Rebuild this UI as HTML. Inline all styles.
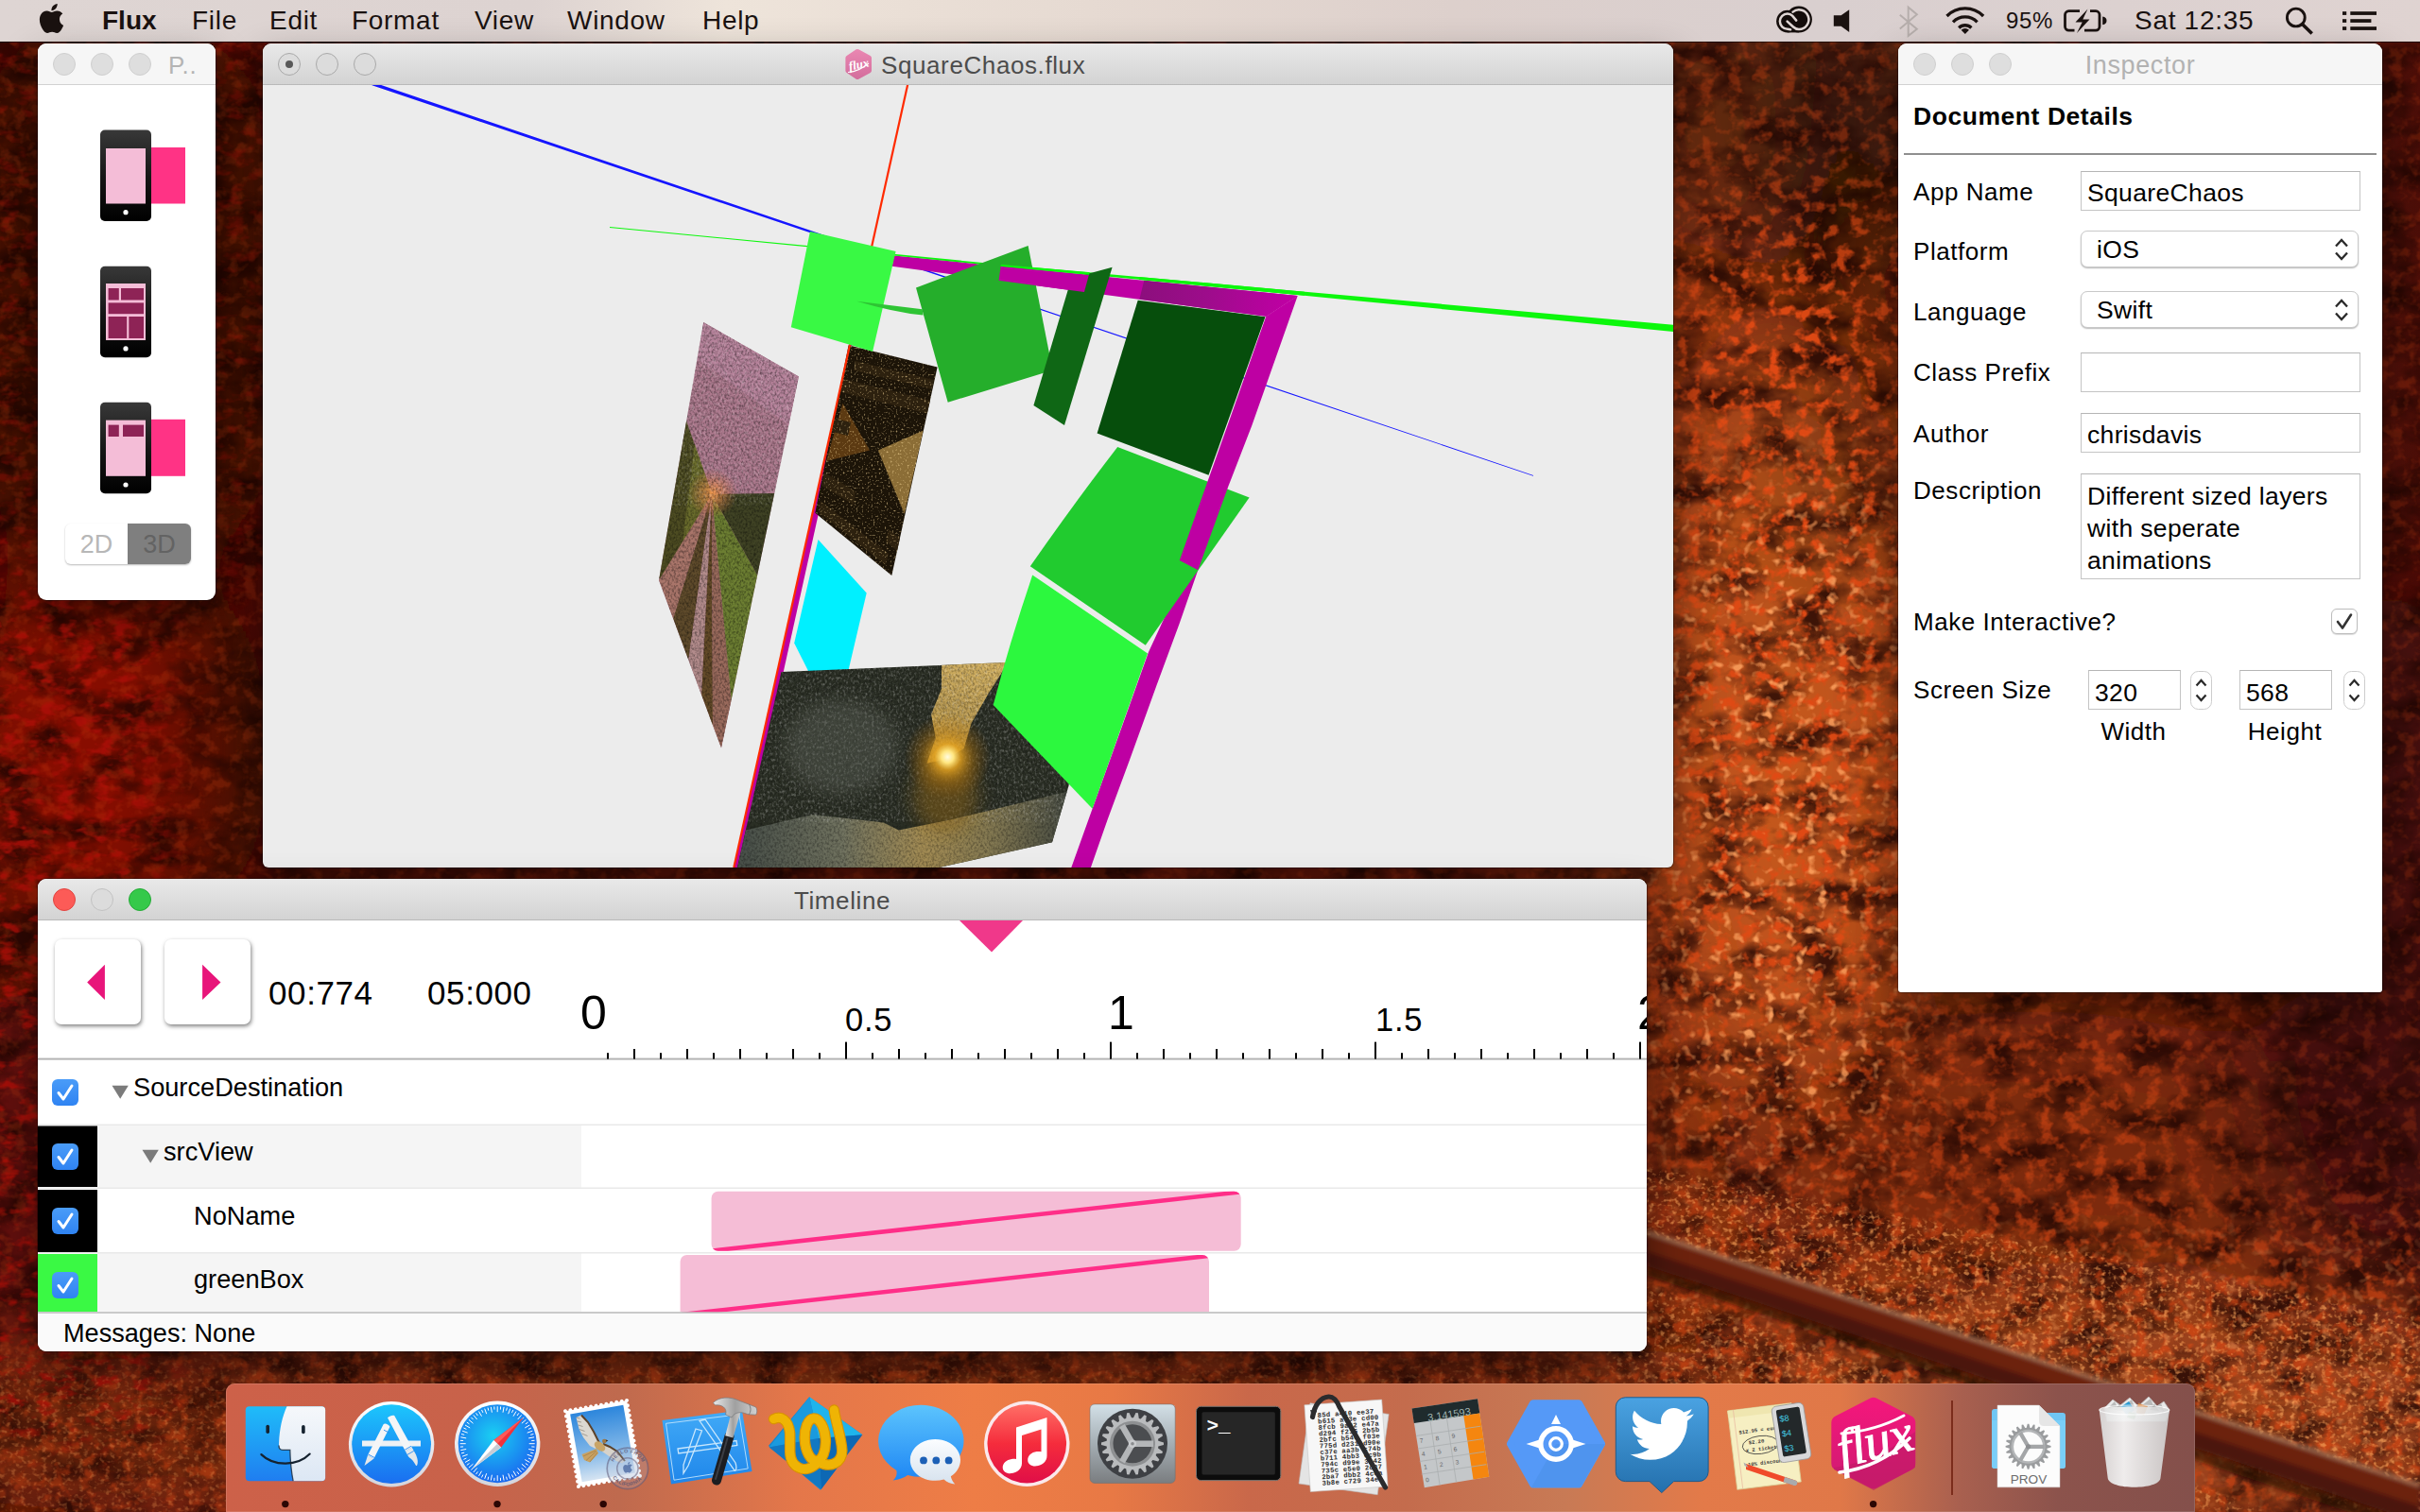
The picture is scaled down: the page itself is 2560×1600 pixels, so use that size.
<!DOCTYPE html>
<html lang="en">
<head>
<meta charset="utf-8">
<title>Flux</title>
<style>
html,body{margin:0;padding:0;}
body{width:2560px;height:1600px;overflow:hidden;position:relative;background:#5e150a;font-family:"Liberation Sans",sans-serif;color:#000;}
.abs{position:absolute;}
#wall{position:absolute;left:0;top:0;width:2560px;height:1600px;}
#menubar{position:absolute;left:0;top:0;width:2560px;height:44px;background:linear-gradient(90deg,#ded5d3 0%,#ddd3d1 22%,#eee4da 30%,#e6dad2 45%,#ddd0cc 60%,#d9cfcf 75%,#dfd3d1 100%);box-shadow:0 1px 0 rgba(0,0,0,.55);}
#menubar .mi{position:absolute;top:0;height:44px;line-height:43px;font-size:28px;color:#1a1210;white-space:nowrap;letter-spacing:.7px;}
.win{position:absolute;border-radius:9px;box-shadow:0 0 0 1px rgba(0,0,0,.28),0 18px 40px rgba(0,0,0,.45);overflow:hidden;background:#fff;}
.tbar{position:absolute;left:0;top:0;right:0;height:43px;border-bottom:1px solid #b9b9b9;background:linear-gradient(#e9e9e9,#d3d3d3);}
.tbar.inactive{background:#f6f6f6;border-bottom:1px solid #d2d2d2;}
.tl{position:absolute;top:10px;width:24px;height:24px;border-radius:50%;box-sizing:border-box;}
.tl.off{background:#dedede;border:1px solid #cfcfcf;}
.ttl{position:absolute;top:1.500px;height:43px;line-height:43px;font-size:26px;letter-spacing:.6px;color:#4a4a4a;white-space:nowrap;}

#timeline .lab{position:absolute;font-size:27.200px;line-height:32px;white-space:nowrap;color:#000;}
.cb{position:absolute;left:15px;width:28px;height:28px;border-radius:6px;background:linear-gradient(#4a9cf8,#2f83f2);}
.cb svg{position:absolute;left:0;top:0;}
#inspector .lb{position:absolute;left:16px;font-size:26px;line-height:30px;white-space:nowrap;color:#000;letter-spacing:.55px;}
#inspector .fld{position:absolute;box-sizing:border-box;border:1px solid #c4c4c4;border-top-color:#b5b5b5;background:#fff;font-size:26.500px;line-height:30px;white-space:nowrap;color:#000;letter-spacing:.35px;}
#inspector .pop{position:absolute;box-sizing:border-box;border:1px solid #c9c9c9;border-radius:7px;background:#fff;box-shadow:0 1px 1.500px rgba(0,0,0,.28);font-size:26.500px;line-height:30px;white-space:nowrap;color:#000;letter-spacing:.35px;}
</style>
</head>
<body>
<svg id="wall" width="2560" height="1600" viewBox="0 0 2560 1600">
<defs>
<filter id="wleaf" x="0" y="0" width="100%" height="100%" color-interpolation-filters="sRGB">
<feTurbulence type="fractalNoise" baseFrequency="0.07 0.08" numOctaves="3" seed="4"/>
<feColorMatrix values="0 0 0 0 0.88  0 0 0 0 0.29  0 0 0 0 0.08  4.2 0 0 0 -2.05"/>
</filter>
<filter id="wdark" x="0" y="0" width="100%" height="100%" color-interpolation-filters="sRGB">
<feTurbulence type="fractalNoise" baseFrequency="0.02 0.03" numOctaves="4" seed="9"/>
<feColorMatrix values="0 0 0 0 0.12  0 0 0 0 0.02  0 0 0 0 0.01  0 2.6 0 0 -1.0"/>
</filter>
<filter id="wfine" x="0" y="0" width="100%" height="100%" color-interpolation-filters="sRGB">
<feTurbulence type="fractalNoise" baseFrequency="0.18 0.22" numOctaves="2" seed="21"/>
<feColorMatrix values="0 0 0 0 1  0 0 0 0 0.66  0 0 0 0 0.36  0 0 4 0 -2.1"/>
</filter>
<filter id="wred" x="0" y="0" width="100%" height="100%" color-interpolation-filters="sRGB">
<feTurbulence type="fractalNoise" baseFrequency="0.05 0.09" numOctaves="3" seed="14"/>
<feColorMatrix values="0 0 0 0 0.68  0 0 0 0 0.06  0 0 0 0 0.03  4 0 0 0 -2.05"/>
</filter>
<mask id="redmask"><g filter="url(#bl30)"><rect x="-60" y="0" width="350" height="620" fill="#5c5c5c"/><rect x="-60" y="620" width="230" height="900" fill="#d0d0d0"/></g></mask>
<filter id="wlite" x="0" y="0" width="100%" height="100%" color-interpolation-filters="sRGB">
<feTurbulence type="fractalNoise" baseFrequency="0.09 0.1" numOctaves="2" seed="33"/>
<feColorMatrix values="0 0 0 0 0.98  0 0 0 0 0.62  0 0 0 0 0.36  0 4.5 0 0 -2.55"/>
</filter>
<mask id="litemask"><g filter="url(#bl60)"><rect x="1770" y="520" width="230" height="700" fill="#fff"/><rect x="1742" y="1320" width="900" height="250" fill="#777"/></g></mask>
<filter id="bl60"><feGaussianBlur stdDeviation="55"/></filter>
<filter id="bl30"><feGaussianBlur stdDeviation="28"/></filter>
<filter id="bl4"><feGaussianBlur stdDeviation="2.500"/></filter>
<linearGradient id="wb" x1="0" y1="0" x2="1" y2="0"><stop offset="0" stop-color="#4a0a05"/><stop offset=".08" stop-color="#5e0d06"/><stop offset=".13" stop-color="#5a1208"/><stop offset=".6" stop-color="#70190b"/><stop offset=".7" stop-color="#8a3212"/><stop offset=".8" stop-color="#86300f"/><stop offset=".9" stop-color="#6a1a0b"/><stop offset="1" stop-color="#4c0e08"/></linearGradient>
<mask id="lmask"><rect width="2560" height="1600" fill="#383838"/><g filter="url(#bl60)"><rect x="1760" y="260" width="260" height="1000" fill="#fff"/><rect x="1760" y="1040" width="560" height="300" fill="#8a8a8a"/><rect x="0" y="1420" width="2560" height="200" fill="#707070"/><rect x="1742" y="1300" width="900" height="320" fill="#a0a0a0"/><rect x="1760" y="30" width="260" height="230" fill="#666"/></g></mask>
<mask id="fmask"><g filter="url(#bl4)"><path d="M1700 1226L2600 1402 2600 1640 1700 1295z" fill="#fff"/><path d="M1700 1345L2400 1600 1700 1600z" fill="#ddd"/></g><g filter="url(#bl30)"><rect x="-50" y="1440" width="1800" height="200" fill="#777"/></g></mask>
</defs>
<rect width="2560" height="1600" fill="url(#wb)"/>
<g filter="url(#bl60)">
<ellipse cx="1890" cy="760" rx="130" ry="400" fill="#c4561c"/>
<ellipse cx="1890" cy="130" rx="170" ry="150" fill="#3c1c0a"/>
<ellipse cx="1930" cy="520" rx="40" ry="120" fill="#4a2a10"/>
<ellipse cx="1940" cy="240" rx="40" ry="200" fill="#211006"/>
<ellipse cx="1805" cy="150" rx="35" ry="110" fill="#7c3312"/>
<ellipse cx="80" cy="800" rx="120" ry="200" fill="#8a0f06"/>
<ellipse cx="235" cy="790" rx="45" ry="200" fill="#240a04"/>
<ellipse cx="130" cy="300" rx="140" ry="300" fill="#3c0905"/>
<ellipse cx="253" cy="340" rx="30" ry="320" fill="#300905"/>
<ellipse cx="18" cy="330" rx="30" ry="320" fill="#3a0905"/>
<ellipse cx="20" cy="1250" rx="60" ry="250" fill="#6a1208"/>
<ellipse cx="2150" cy="1230" rx="330" ry="160" fill="#7c2a0e"/>
<ellipse cx="2530" cy="1000" rx="90" ry="400" fill="#430d07"/>
<ellipse cx="2490" cy="1170" rx="130" ry="130" fill="#3c0d07"/>
<ellipse cx="1000" cy="1520" rx="1300" ry="110" fill="#7c2e11"/>
<ellipse cx="2250" cy="1500" rx="420" ry="130" fill="#a3461b"/>
</g>
<rect width="2560" height="1600" filter="url(#wdark)" opacity=".8"/>
<g mask="url(#lmask)"><rect width="2560" height="1600" filter="url(#wleaf)"/></g>
<g mask="url(#redmask)"><rect width="320" height="1600" filter="url(#wred)"/></g>
<g mask="url(#litemask)"><rect width="2560" height="1600" filter="url(#wlite)"/></g>
<g mask="url(#fmask)" opacity=".6"><rect x="0" y="1200" width="2560" height="400" filter="url(#wfine)"/></g>
<g filter="url(#bl4)"><path d="M1742 1304L2560 1572 2560 1610 1742 1338z" fill="#6c220c"/><path d="M1742 1324L2560 1594 2560 1612 1742 1340z" fill="#4c1408"/><path d="M1742 1340L2560 1612 2560 1626 1742 1350z" fill="#2a0a05" opacity=".7"/><path d="M1742 1303.500L2560 1571.500" stroke="#b48a6a" stroke-width="3.500" fill="none" opacity=".8"/></g>
</svg>
<div id="menubar">
<svg class="abs" style="left:39px;top:4px" width="31" height="31" viewBox="0 0 24 24"><path fill="#1a1210" d="M12.152 6.896c-.948 0-2.415-1.078-3.96-1.04-2.04.027-3.91 1.183-4.961 3.014-2.117 3.675-.546 9.103 1.519 12.09 1.013 1.454 2.208 3.09 3.792 3.039 1.52-.065 2.09-.987 3.935-.987 1.831 0 2.35.987 3.96.948 1.637-.026 2.676-1.48 3.676-2.948 1.156-1.688 1.636-3.325 1.662-3.415-.039-.013-3.182-1.221-3.22-4.857-.026-3.04 2.48-4.494 2.597-4.559-1.429-2.09-3.623-2.324-4.39-2.376-2-.156-3.675 1.09-4.61 1.09zM15.53 3.83c.843-1.012 1.4-2.427 1.245-3.83-1.207.052-2.662.805-3.532 1.818-.78.896-1.454 2.338-1.273 3.714 1.338.104 2.715-.688 3.559-1.701"/></svg>
<div class="mi" style="left:108px;font-weight:bold;letter-spacing:0">Flux</div>
<div class="mi" style="left:203px">File</div>
<div class="mi" style="left:285px">Edit</div>
<div class="mi" style="left:372px">Format</div>
<div class="mi" style="left:502px">View</div>
<div class="mi" style="left:600px">Window</div>
<div class="mi" style="left:743px">Help</div>
<svg class="abs" style="left:1870px;top:0" width="660" height="44" viewBox="1870 0 660 44">
<g fill="#140d0b"><circle cx="1890.900" cy="22.600" r="11.800"/><circle cx="1902.900" cy="20.600" r="14"/><rect x="1890.900" y="25" width="12" height="9.400"/></g>
<g fill="none" stroke="#e0d7d5" stroke-width="2.500" stroke-linecap="round" stroke-linejoin="round"><path d="M1894.100 31.300Q1892.500 30.700 1890.900 30.650A8.050 8.050 0 0 1 1890.900 14.550Q1894 14.600 1896 16.600L1900.200 21.600"/><path d="M1896.600 12.600A10.300 10.300 0 1 1 1902.900 30.900Q1899.500 30.900 1897 28.500L1890.600 22.600"/></g>
<path fill="#1a1210" d="M1939.800 16.200h7.800l8.600-6v23.700l-8.600-6.100h-7.800z"/>
<path fill="none" stroke="#b6aeac" stroke-width="2" stroke-linejoin="miter" d="M2009.800 15.700l18 15-9.100 7.300v-30.300l9.100 7.600-18 15.300"/>
<g fill="none" stroke="#1a1210" stroke-width="3.300">
<path d="M2059.500 17a27 27 0 0 1 38.600 0"/>
<path d="M2066 23.300a18 18 0 0 1 25.600 0"/>
<path d="M2072.200 29.500a9.300 9.300 0 0 1 13.200 0"/>
</g>
<path fill="#1a1210" d="M2078.800 36l-4.200-4.300a6 6 0 0 1 8.400 0z"/>
<g fill="none" stroke="#1a1210" stroke-width="2.800" stroke-linejoin="round">
<path d="M2200 11.700h-11.500a4 4 0 0 0 -4 4v12.400a4 4 0 0 0 4 4h6"/>
<path d="M2205 32.100h12a4 4 0 0 0 4-4v-12.400a4 4 0 0 0 -4-4h-6"/>
</g>
<path fill="#1a1210" d="M2224.200 17.500c3 .5 4.300 2.200 4.300 4.400s-1.300 3.900-4.300 4.400z"/>
<path fill="#1a1210" d="M2208.500 9.500l-13 14h7.200l-5.700 11.500 13.500-14.500h-7.200z"/>
<circle cx="2428.800" cy="18.500" r="9.400" fill="none" stroke="#1a1210" stroke-width="2.900"/>
<path d="M2435.700 25.800l10 9.700" stroke="#1a1210" stroke-width="3.600" fill="none"/>
<g fill="#1a1210">
<rect x="2478" y="12.200" width="4.200" height="3.700"/><rect x="2486.300" y="12.200" width="27.700" height="3.700"/>
<rect x="2478" y="20.200" width="4.200" height="3.700"/><rect x="2486.300" y="20.200" width="22.100" height="3.700"/>
<rect x="2478" y="28.200" width="4.200" height="3.700"/><rect x="2486.300" y="28.200" width="27.700" height="3.700"/>
</g>
</svg>
<div class="mi" style="left:2122px;font-size:24px;line-height:44px">95%</div>
<div class="mi" style="left:2258px">Sat 12:35</div>
</div>
<div class="win" id="palette" style="left:40px;top:46px;width:188px;height:589px;">
<div class="tbar inactive"></div>
<div class="tl off" style="left:16px"></div><div class="tl off" style="left:56px"></div><div class="tl off" style="left:96px"></div>
<div class="ttl" style="left:138px;color:#b4b4b4;">P..</div>
<svg class="abs" style="left:0;top:44px" width="188" height="545" viewBox="40 90 188 545">
<defs><linearGradient id="ph" x1="0" y1="0" x2="0" y2="1"><stop offset="0" stop-color="#383838"/><stop offset=".55" stop-color="#141414"/><stop offset="1" stop-color="#000"/></linearGradient></defs>
<g id="phone"><rect x="106" y="137.500" width="54" height="96.500" rx="5" fill="url(#ph)"/><circle cx="133" cy="224.700" r="2.600" fill="#fff"/></g>
<rect x="112" y="157" width="42" height="58.500" fill="#f4bdd7"/>
<rect x="160" y="156" width="36" height="59.500" fill="#ff3385"/>
<use href="#phone" y="144.200"/>
<rect x="112" y="300" width="42" height="60" fill="#f4bdd7"/>
<g fill="#8e2356"><rect x="114.600" y="305" width="11.200" height="12.500"/><rect x="128" y="305" width="24" height="12.500"/><rect x="114.600" y="320.400" width="37.400" height="11.800"/><rect x="114.600" y="335" width="19.600" height="23"/><rect x="136.300" y="335" width="15.700" height="23"/></g>
<use href="#phone" y="288.300"/>
<rect x="112" y="444.600" width="42" height="59.200" fill="#f4bdd7"/>
<g fill="#8e2356"><rect x="114.600" y="449.600" width="11.200" height="12.400"/><rect x="130" y="449.600" width="22" height="12.400"/></g>
<rect x="160" y="443.800" width="36" height="60" fill="#ff3385"/>
</svg>
<div class="abs" style="left:29px;top:508px;width:133px;height:43px;border-radius:6px;background:#fff;box-shadow:0 1px 2px rgba(0,0,0,.28);"></div>
<div class="abs" style="left:95px;top:508px;width:67px;height:43px;border-radius:0 6px 6px 0;background:#7f7f7f;"></div>
<div class="abs" style="left:29px;top:508px;width:66px;height:43px;line-height:44px;text-align:center;font-size:27px;color:#b7b7b7;">2D</div>
<div class="abs" style="left:95px;top:508px;width:67px;height:43px;line-height:44px;text-align:center;font-size:27px;color:#636363;">3D</div>
</div>
<div class="win" id="main" style="left:278px;top:46px;width:1492px;height:872px;background:#ececec;border-radius:9px 9px 6px 6px;">
<div class="tbar"></div>
<div class="tl" style="left:16px;background:#dcdcdc;border:1px solid #a9a9a9"></div><div class="abs" style="left:24px;top:18px;width:8px;height:8px;border-radius:50%;background:#585858"></div>
<div class="tl" style="left:56px;background:#dcdcdc;border:1px solid #a9a9a9"></div><div class="tl" style="left:96px;background:#dcdcdc;border:1px solid #a9a9a9"></div>
<svg class="abs" style="left:615px;top:5px" width="32" height="34" viewBox="0 0 32 34"><defs><linearGradient id="hx" x1="0" y1="0" x2="0" y2="1"><stop offset="0" stop-color="#ea87b2"/><stop offset="1" stop-color="#d36d9c"/></linearGradient></defs><path d="M15.300 1.200l12.400 6.800q1.300.8 1.300 2.300v13.400q0 1.500-1.300 2.300l-12.400 6.800q-1.300.6-2.600 0l-10-6.800q-1.300-.8-1.300-2.300v-13.400q0-1.500 1.300-2.300l10-6.800q1.300-.6 2.600 0z" fill="url(#hx)"/><text x="4.500" y="21.500" font-family="'Liberation Serif',serif" font-style="italic" font-weight="bold" font-size="13" fill="#fff" transform="rotate(-12 15 17)">flux</text><path d="M4 25.500q12-1 22-9.500" stroke="#fff" stroke-width="1.200" fill="none"/></svg>
<div class="ttl" style="left:654px;color:#4c4c4c;">SquareChaos.flux</div>
<svg class="abs" style="left:0;top:44px" width="1492" height="828" viewBox="278 90 1492 828">
<defs>
<clipPath id="cPink"><path d="M744.200 341L845 398.400 763 791.500 697 614z"/></clipPath>
<clipPath id="cDark"><path d="M897.600 365.300L991.600 388.400 943.300 608.900 862.300 542.700z"/></clipPath>
<clipPath id="cSnow"><path d="M826.500 710.900L1170 696.700 1113 891.300 993 918 780 918z"/></clipPath>
<linearGradient id="dm" gradientUnits="userSpaceOnUse" x1="1208" y1="305" x2="1360" y2="325"><stop offset="0" stop-color="#8c0f7d"/><stop offset=".45" stop-color="#9d0c8b"/><stop offset="1" stop-color="#be00a3"/></linearGradient>
<filter id="nz" x="0" y="0" width="100%" height="100%"><feTurbulence type="fractalNoise" baseFrequency="0.45 0.35" numOctaves="2" seed="7"/><feColorMatrix values="0 0 0 0 0  0 0 0 0 0  0 0 0 0 0  1.9 0 0 0 -0.75"/></filter>
<filter id="nzw" x="0" y="0" width="100%" height="100%"><feTurbulence type="fractalNoise" baseFrequency="0.4 0.3" numOctaves="2" seed="11"/><feColorMatrix values="0 0 0 0 1  0 0 0 0 1  0 0 0 0 1  0 2.2 0 0 -1.05"/></filter>
<filter id="nzl" x="0" y="0" width="100%" height="100%"><feTurbulence type="fractalNoise" baseFrequency="0.5" numOctaves="1" seed="5"/><feColorMatrix values="0 0 0 0 1  0 0 0 0 .75  0 0 0 0 .35  0 0 3.5 0 -2.05"/></filter>
<filter id="pbl" x="-50%" y="-50%" width="200%" height="200%"><feGaussianBlur stdDeviation="9"/></filter>
<radialGradient id="sun" gradientUnits="userSpaceOnUse" cx="1002.400" cy="801" r="46"><stop offset="0" stop-color="#fffbe0"/><stop offset=".14" stop-color="#ffe680"/><stop offset=".3" stop-color="#e0a020" stop-opacity=".85"/><stop offset=".6" stop-color="#a87010" stop-opacity=".45"/><stop offset="1" stop-color="#805008" stop-opacity="0"/></radialGradient>
<linearGradient id="sky" gradientUnits="userSpaceOnUse" x1="1030" y1="700" x2="1000" y2="805"><stop offset="0" stop-color="#d2b061"/><stop offset=".5" stop-color="#b99a52"/><stop offset="1" stop-color="#e6b748"/></linearGradient>
<linearGradient id="gnd" gradientUnits="userSpaceOnUse" x1="790" y1="0" x2="1130" y2="0"><stop offset="0" stop-color="#4a514a"/><stop offset=".3" stop-color="#70725f"/><stop offset=".55" stop-color="#a38c54"/><stop offset=".75" stop-color="#857a52"/><stop offset="1" stop-color="#464b42"/></linearGradient>
<radialGradient id="vp" gradientUnits="userSpaceOnUse" cx="754" cy="522" r="26"><stop offset="0" stop-color="#f09850"/><stop offset="1" stop-color="#c06a40" stop-opacity="0"/></radialGradient>

</defs>
<path d="M393.5 86.7L600.0 156.7L857.0 243.8L1000.0 292.5L1106.0 328.4L1340.0 407.6L1622.0 502.9L1622.0 503.7L1340.0 408.7L1106.0 329.7L1000.0 294.1L857.0 246.2L600.0 159.7L393.5 90.2z" fill="#1515ff"/>
<polygon points="899.7,362.0 902.2,362.0 866.0,543.0 782.8,918.0 776.3,918.0" fill="#be00a3"/>
<path d="M1267.300 603.200L1247.600 660 1223.500 725.300 1194.300 806.100 1172 866.300 1153.900 918 1133.300 918 1155.600 855.700 1190 760 1215 690 1245 625z" fill="#be00a3"/>
<g id="ftop"><path d="M945.900 270.400L1372.700 313 1339.300 334.800 943.600 281.700z" fill="#be00a3"/><path d="M645.0 240.0L854.0 260.1L1060.0 279.9L1210.0 293.4L1372.0 308.0L1440.0 314.1L1600.0 328.5L1770.0 343.8L1770.0 351.0L1600.0 334.3L1440.0 318.7L1372.0 312.0L1210.0 296.3L1060.0 281.9L854.0 261.2L645.0 240.9z" fill="#0cf70c"/></g>
<g clip-path="url(#cPink)"><rect x="690" y="335" width="160" height="460" fill="#ab788c"/>
<path d="M744 341L845 398 835 450 738 380z" fill="#b5829a"/>
<path d="M725 442L753 523 700 612 690 612 690 480z" fill="#4d4c22"/>
<path d="M735 470L753 523 722 575z" fill="#6a6c2c"/>
<path d="M753 523L697 614 712 655z" fill="#a9756a"/>
<path d="M753 523L712 655 728 700z" fill="#5e4a2b"/>
<path d="M753 523L728 700 742 738z" fill="#b28b8b"/>
<path d="M753 523L742 738 754 770z" fill="#634a28"/>
<path d="M753 523L754 770 763 792 774 745z" fill="#996a5c"/>
<path d="M753 523L774 745 802 610z" fill="#6c7e32"/>
<path d="M753 523L802 610 812 565 822 522z" fill="#3f4224"/>
<rect x="690" y="335" width="160" height="460" fill="url(#vp)"/>
<rect x="690" y="335" width="160" height="460" filter="url(#nz)" opacity=".5"/>
<rect x="690" y="335" width="160" height="200" filter="url(#nzw)" opacity=".25"/></g>
<g clip-path="url(#cDark)"><rect x="860" y="360" width="135" height="252" fill="#1c1408"/>
<path d="M976.800 455.500L928.900 476.600 956.700 543.700z" fill="#8b6d36"/>
<path d="M891.500 426.700L920 476.600 874 488z" fill="#5c3a12"/>
<path d="M889 400L985 424 982 438 886 414z M880 442L900 447 897 461 877 456z M872 500L905 520 903 534 869 514z M940 560L958 574 955 588 937 573z M905 382L988 402 986 412 903 392z M868 530L940 586 937 598 866 542z" fill="#2d210f"/>
<rect x="860" y="360" width="135" height="252" filter="url(#nzl)" opacity=".7"/></g>
<path d="M865.500 571L916.700 627.500 895 720 860 720 840.200 680.400z" fill="#00f0ff"/>
<g clip-path="url(#cSnow)"><rect x="775" y="690" width="400" height="230" fill="#2b2f25"/>
<path d="M996 700L1067 696 1060.500 710.400 1045 735 1027.500 765.400 1019.700 792 1002.400 803 980.400 807.800 989.800 781 985 756 996 729z" fill="url(#sky)"/>
<path d="M775 880L788.800 878.400 860 862 934.900 870.600 950.600 878.400 1005.600 867.500 1070 852 1129.600 837.600 1140 835 1140 920 775 920z" fill="url(#gnd)"/>
<rect x="775" y="690" width="400" height="180" filter="url(#nzw)" opacity=".33"/>
<rect x="775" y="690" width="400" height="230" filter="url(#nz)" opacity=".4"/>
<ellipse cx="1000" cy="842" rx="34" ry="40" fill="#8a6416" opacity=".5" filter="url(#pbl)"/><ellipse cx="890" cy="790" rx="60" ry="50" fill="#6a7068" opacity=".35" filter="url(#pbl)"/><circle cx="1002.400" cy="801" r="46" fill="url(#sun)"/></g>
<path d="M960.300 89L776.300 918" stroke="#ff2a00" stroke-width="2.200" fill="none"/>
<path d="M856.900 245L947.600 266.100 923.100 372 836.800 346.300z" fill="#39f944"/>
<path d="M906.200 318.700L975.700 327.300 976.500 333.600Q946 330.500 906.200 318.700z" fill="#2ec434"/>
<path d="M969 304.500L1087.600 260 1113.500 391.800 1002.700 425.800z" fill="#25ae2b"/>
<path d="M1133.400 294.500L1176.600 282.700 1126 450 1093.400 429z" fill="#0f6715"/>
<g clip-path="url(#cSeg2)"><use href="#ftop"/></g>
<clipPath id="cSeg2"><path d="M1060.200 270L1153.500 285 1146.700 310 1056.500 297.500z"/></clipPath>
<path d="M1203.700 317.700L1338.500 335.300 1278.500 502.700 1160.600 458.600z" fill="#064e0c"/>
<path d="M1210.300 296.800L1372.700 313 1339.300 334.800 1205.400 316.600z" fill="url(#dm)"/>
<path d="M1205.0 293.0L1380.0 308.7L1380.0 312.8L1205.0 295.9z" fill="#0cf70c"/>
<path d="M1182.200 472.900L1321.600 526.500 1211.800 682.700 1089.800 599.200Q1139 528.900 1182.200 472.900z" fill="#21cb2f"/>
<path d="M1372.700 313L1324.400 450 1299.400 514.600 1267.300 603.200 1247.800 592.900 1298.600 450 1339.300 334.800z" fill="#be00a3"/>
<path d="M1092.200 608.500L1214 691.500 1155.600 855.700 1050.700 746Q1068 680 1092.200 608.500z" fill="#2cf83e"/>

</svg>
</div>
<div class="win" id="timeline" style="left:40px;top:930px;width:1702px;height:500px;">
<div class="tbar"></div>
<div class="tl" style="left:16px;background:#fc5b57;border:1px solid #e2443f"></div><div class="tl" style="left:56px;background:#dcdcdc;border:1px solid #c2c2c2"></div><div class="tl" style="left:96px;background:#35c94a;border:1px solid #24ab36"></div>
<div class="ttl" style="left:0;width:1702px;text-align:center;color:#4c4c4c;">Timeline</div>
<div class="abs" style="left:18px;top:64px;width:91px;height:90px;border-radius:7px;background:#fff;box-shadow:1px 2px 4px rgba(0,0,0,.5);"></div>
<div class="abs" style="left:134px;top:64px;width:91px;height:90px;border-radius:7px;background:#fff;box-shadow:1px 2px 4px rgba(0,0,0,.5);"></div>
<svg class="abs" style="left:0;top:44px" width="1702" height="456" viewBox="0 0 1702 456">
<path d="M52.200 65.400L70.900 46.700 70.900 84z M193.500 65.400L174.100 46.700 174.100 84z" fill="#e8157a"/>
<path d="M975 0L1042 0 1009 33.600z" fill="#f0388a"/>
<rect x="0" y="145.600" width="1702" height="2" fill="#b4b4b4"/>
<g fill="#000"><rect x="602.0" y="140.2" width="2" height="6.4"/><rect x="630.0" y="136.0" width="2" height="10.6"/><rect x="658.0" y="140.2" width="2" height="6.4"/><rect x="686.0" y="136.0" width="2" height="10.6"/><rect x="714.0" y="140.2" width="2" height="6.4"/><rect x="742.0" y="136.0" width="2" height="10.6"/><rect x="770.0" y="140.2" width="2" height="6.4"/><rect x="798.0" y="136.0" width="2" height="10.6"/><rect x="826.0" y="140.2" width="2" height="6.4"/><rect x="854.0" y="128.6" width="2" height="18.0"/><rect x="882.0" y="140.2" width="2" height="6.4"/><rect x="910.0" y="136.0" width="2" height="10.6"/><rect x="938.0" y="140.2" width="2" height="6.4"/><rect x="966.0" y="136.0" width="2" height="10.6"/><rect x="994.0" y="140.2" width="2" height="6.4"/><rect x="1022.0" y="136.0" width="2" height="10.6"/><rect x="1050.0" y="140.2" width="2" height="6.4"/><rect x="1078.0" y="136.0" width="2" height="10.6"/><rect x="1106.0" y="140.2" width="2" height="6.4"/><rect x="1134.0" y="128.6" width="2" height="18.0"/><rect x="1162.0" y="140.2" width="2" height="6.4"/><rect x="1190.0" y="136.0" width="2" height="10.6"/><rect x="1218.0" y="140.2" width="2" height="6.4"/><rect x="1246.0" y="136.0" width="2" height="10.6"/><rect x="1274.0" y="140.2" width="2" height="6.4"/><rect x="1302.0" y="136.0" width="2" height="10.6"/><rect x="1330.0" y="140.2" width="2" height="6.4"/><rect x="1358.0" y="136.0" width="2" height="10.6"/><rect x="1386.0" y="140.2" width="2" height="6.4"/><rect x="1414.0" y="128.6" width="2" height="18.0"/><rect x="1442.0" y="140.2" width="2" height="6.4"/><rect x="1470.0" y="136.0" width="2" height="10.6"/><rect x="1498.0" y="140.2" width="2" height="6.4"/><rect x="1526.0" y="136.0" width="2" height="10.6"/><rect x="1554.0" y="140.2" width="2" height="6.4"/><rect x="1582.0" y="136.0" width="2" height="10.6"/><rect x="1610.0" y="140.2" width="2" height="6.4"/><rect x="1638.0" y="136.0" width="2" height="10.6"/><rect x="1666.0" y="140.2" width="2" height="6.4"/><rect x="1694.0" y="128.6" width="2" height="18.0"/></g>
<rect x="63" y="216" width="512" height="67" fill="#f5f5f5"/><rect x="63" y="352" width="512" height="62" fill="#f5f5f5"/>
<rect x="0" y="215.500" width="1702" height="1.500" fill="#e9e9e9"/><rect x="0" y="282.500" width="1702" height="1.500" fill="#e9e9e9"/><rect x="0" y="351" width="1702" height="1.500" fill="#e9e9e9"/>
<rect x="0" y="217.500" width="63" height="64.500" fill="#000"/><rect x="0" y="285" width="63" height="66" fill="#000"/><rect x="0" y="353" width="63" height="61" fill="#3af944"/>
<clipPath id="b1"><rect x="712.600" y="286.700" width="560.100" height="63" rx="7"/></clipPath>
<clipPath id="b2"><rect x="679.600" y="354" width="559.400" height="70" rx="7"/></clipPath>
<g clip-path="url(#b1)"><rect x="700" y="280" width="600" height="80" fill="#f5bdd6"/><path d="M714 349.500L1271 287.500" stroke="#ff2e88" stroke-width="4.500"/></g>
<g clip-path="url(#b2)"><rect x="670" y="350" width="600" height="64" fill="#f5bdd6"/><path d="M681 417L1238 355" stroke="#ff2e88" stroke-width="4.500"/></g>
<rect x="0" y="415" width="1702" height="42" fill="#fafafa"/><rect x="0" y="414.200" width="1702" height="1.600" fill="#bdbdbd"/>
<path d="M78.500 174.800L95.800 174.800 87.200 188.800z M110.500 242.800L127.800 242.800 119.200 256.800z" fill="#7b7b7b"/>
</svg>
<div class="cb" style="top:212px"><svg width="28" height="28" viewBox="0 0 28 28"><path d="M7 14.500l5 6.500 9-14" fill="none" stroke="#fff" stroke-width="3" stroke-linecap="round" stroke-linejoin="round"/></svg></div><div class="cb" style="top:280px"><svg width="28" height="28" viewBox="0 0 28 28"><path d="M7 14.500l5 6.500 9-14" fill="none" stroke="#fff" stroke-width="3" stroke-linecap="round" stroke-linejoin="round"/></svg></div><div class="cb" style="top:348px"><svg width="28" height="28" viewBox="0 0 28 28"><path d="M7 14.500l5 6.500 9-14" fill="none" stroke="#fff" stroke-width="3" stroke-linecap="round" stroke-linejoin="round"/></svg></div><div class="cb" style="top:416px"><svg width="28" height="28" viewBox="0 0 28 28"><path d="M7 14.500l5 6.500 9-14" fill="none" stroke="#fff" stroke-width="3" stroke-linecap="round" stroke-linejoin="round"/></svg></div>
<div class="lab" style="left:244px;top:101px;font-size:35px;line-height:40px;letter-spacing:.6px">00:774</div>
<div class="lab" style="left:412px;top:101px;font-size:35px;line-height:40px;letter-spacing:.6px">05:000</div>
<div class="lab" style="left:574px;top:114px;font-size:50px;line-height:56px">0</div>
<div class="lab" style="left:854px;top:130px;font-size:34.500px;line-height:38px;letter-spacing:.8px">0.5</div>
<div class="lab" style="left:1132px;top:114px;font-size:50px;line-height:56px">1</div>
<div class="lab" style="left:1415px;top:130px;font-size:34.500px;line-height:38px;letter-spacing:.8px">1.5</div>
<div class="lab" style="left:1692px;top:114px;font-size:50px;line-height:56px">2</div>
<div class="lab" style="left:101px;top:205px">SourceDestination</div>
<div class="lab" style="left:133px;top:273px">srcView</div>
<div class="lab" style="left:165px;top:341px">NoName</div>
<div class="lab" style="left:165px;top:408px">greenBox</div>
<div class="lab" style="left:27px;top:465px;font-size:27.100px">Messages: None</div>
</div>
<div class="win" id="inspector" style="left:2008px;top:46px;width:512px;height:1004px;border-radius:9px 9px 3px 3px;">
<div class="tbar inactive"></div>
<div class="tl off" style="left:16px"></div><div class="tl off" style="left:56px"></div><div class="tl off" style="left:96px"></div>
<div class="ttl" style="left:0;width:512px;text-align:center;color:#b2b2b2;font-size:27px">Inspector</div>
<div class="lb" style="top:62px;font-weight:bold;font-size:26.500px">Document Details</div>
<div class="abs" style="left:6px;top:116px;width:500px;height:2px;background:#8f8f8f"></div>
<div class="lb" style="top:142px">App Name</div>
<div class="fld" style="left:193px;top:135px;width:296px;height:42px;padding:7px 0 0 6px">SquareChaos</div>
<div class="lb" style="top:205px">Platform</div>
<div class="pop" style="left:193px;top:198px;width:294px;height:39px;padding:4px 0 0 16px">iOS<svg class="abs" style="right:9px;top:6px" width="16" height="26" viewBox="0 0 16 26"><path d="M2 9.500L8 3l6 6.500M2 16.500L8 23l6-6.500" fill="none" stroke="#2a2a2a" stroke-width="2.300" stroke-linejoin="miter"/></svg></div>
<div class="lb" style="top:269px">Language</div>
<div class="pop" style="left:193px;top:262px;width:294px;height:39px;padding:4px 0 0 16px">Swift<svg class="abs" style="right:9px;top:6px" width="16" height="26" viewBox="0 0 16 26"><path d="M2 9.500L8 3l6 6.500M2 16.500L8 23l6-6.500" fill="none" stroke="#2a2a2a" stroke-width="2.300" stroke-linejoin="miter"/></svg></div>
<div class="lb" style="top:333px">Class Prefix</div>
<div class="fld" style="left:193px;top:327px;width:296px;height:42px"></div>
<div class="lb" style="top:398px">Author</div>
<div class="fld" style="left:193px;top:391px;width:296px;height:42px;padding:7px 0 0 6px">chrisdavis</div>
<div class="lb" style="top:458px">Description</div>
<div class="fld" style="left:193px;top:455px;width:296px;height:112px;padding:5.500px 0 0 6px;line-height:34.200px">Different sized layers<br>with seperate<br>animations</div>
<div class="lb" style="top:597px">Make Interactive?</div>
<div class="abs" style="left:458px;top:598px;width:28px;height:27px;box-sizing:border-box;border:1px solid #bdbdbd;border-radius:6px;background:#fff;box-shadow:0 1px 1px rgba(0,0,0,.15)"><svg class="abs" style="left:0;top:0" width="26" height="25" viewBox="0 0 26 25"><path d="M6 13l5 6.500 9-14" fill="none" stroke="#333" stroke-width="2.600" stroke-linecap="round" stroke-linejoin="round"/></svg></div>
<div class="lb" style="top:669px">Screen Size</div>
<div class="fld" style="left:201px;top:663px;width:98px;height:42px;padding:8px 0 0 6px">320</div>
<div class="abs" style="left:309px;top:664px"><svg width="23" height="41" viewBox="0 0 23 41"><rect x=".5" y=".5" width="22" height="40" rx="8" fill="#fff" stroke="#cdcdcd"/><path d="M6.500 15.500L11.500 10l5 5.500M6.500 25.500L11.500 31l5-5.500" fill="none" stroke="#2a2a2a" stroke-width="2.200"/></svg></div>
<div class="fld" style="left:361px;top:663px;width:98px;height:42px;padding:8px 0 0 6px">568</div>
<div class="abs" style="left:471px;top:664px"><svg width="23" height="41" viewBox="0 0 23 41"><rect x=".5" y=".5" width="22" height="40" rx="8" fill="#fff" stroke="#cdcdcd"/><path d="M6.500 15.500L11.500 10l5 5.500M6.500 25.500L11.500 31l5-5.500" fill="none" stroke="#2a2a2a" stroke-width="2.200"/></svg></div>
<div class="lb" style="left:199px;width:100px;text-align:center;top:713px">Width</div>
<div class="lb" style="left:359px;width:100px;text-align:center;top:713px">Height</div>
</div>
<div id="dock" class="abs" style="left:239px;top:1464px;width:2083px;height:136px;border-radius:9px 9px 0 0;background:linear-gradient(90deg,#cd6149 0%,#c8624a 12%,#bf6a4e 20%,#e4774a 29%,#ee7d46 38%,#e87945 45%,#c9684a 52%,#c46c4d 60%,#c87a55 68%,#e37a49 75%,#e07848 82%,#a9604f 88%,#8c534c 93%,#84504b 100%);box-shadow:0 0 0 1px rgba(255,255,255,.12) inset;">
<!--DI0--><svg class="abs" style="left:0;top:0" width="2083" height="136" viewBox="239 1464 2083 136"><defs>
<linearGradient id="gF1" x1="0" y1="0" x2="0" y2="1"><stop offset="0" stop-color="#1fbcf9"/><stop offset="1" stop-color="#1f7df0"/></linearGradient>
<linearGradient id="gF2" x1="0" y1="0" x2="0" y2="1"><stop offset="0" stop-color="#f6f8fb"/><stop offset="1" stop-color="#dce7f4"/></linearGradient>
<linearGradient id="gA" x1="0" y1="0" x2="0" y2="1"><stop offset="0" stop-color="#1cc6fc"/><stop offset="1" stop-color="#1a6ef0"/></linearGradient>
<radialGradient id="gS" cx=".45" cy=".4" r=".6"><stop offset="0" stop-color="#1ad0f2"/><stop offset="1" stop-color="#1a6af0"/></radialGradient>
<linearGradient id="gRing" x1="0" y1="0" x2="0" y2="1"><stop offset="0" stop-color="#fff"/><stop offset="1" stop-color="#d4d4dc"/></linearGradient>
<linearGradient id="gSky" x1="0" y1="0" x2="0" y2="1"><stop offset="0" stop-color="#2c86dc"/><stop offset=".6" stop-color="#7fb6e8"/><stop offset="1" stop-color="#d6e4f2"/></linearGradient>
<linearGradient id="gX" x1="0" y1="0" x2="0" y2="1"><stop offset="0" stop-color="#41aaf7"/><stop offset="1" stop-color="#1f86ea"/></linearGradient>
<linearGradient id="gM" x1="0" y1="0" x2="0" y2="1"><stop offset="0" stop-color="#5cc4fd"/><stop offset="1" stop-color="#1e86f4"/></linearGradient>
<linearGradient id="gM2" x1="0" y1="0" x2="0" y2="1"><stop offset="0" stop-color="#fbfdff"/><stop offset="1" stop-color="#d6e2ee"/></linearGradient>
<linearGradient id="gI" x1="0" y1="0" x2="0" y2="1"><stop offset="0" stop-color="#ff6f66"/><stop offset=".5" stop-color="#f52c3c"/><stop offset="1" stop-color="#e00e48"/></linearGradient>
<linearGradient id="gP" x1="0" y1="0" x2="0" y2="1"><stop offset="0" stop-color="#d3e0e7"/><stop offset=".45" stop-color="#a9b3b9"/><stop offset="1" stop-color="#7a7d80"/></linearGradient>
<linearGradient id="gT" x1="0" y1="0" x2="0" y2="1"><stop offset="0" stop-color="#4aa2e2"/><stop offset="1" stop-color="#2470ad"/></linearGradient>
<linearGradient id="gFx" x1="0" y1="0" x2="0" y2="1"><stop offset="0" stop-color="#f2177b"/><stop offset="1" stop-color="#d01a72"/></linearGradient>
<linearGradient id="gTr" x1="0" y1="0" x2="1" y2="0"><stop offset="0" stop-color="#dcdcdc" stop-opacity=".92"/><stop offset=".35" stop-color="#f4f4f4" stop-opacity=".95"/><stop offset="1" stop-color="#d2d2d2" stop-opacity=".9"/></linearGradient>
<linearGradient id="gHam" x1="0" y1="0" x2="1" y2="0"><stop offset="0" stop-color="#e8e8e8"/><stop offset=".5" stop-color="#a0a0a0"/><stop offset="1" stop-color="#d0d0d0"/></linearGradient>
<clipPath id="cFind"><rect x="259.800" y="1488.200" width="84.300" height="79.100" rx="4"/></clipPath>
</defs>
<g clip-path="url(#cFind)"><rect x="259" y="1488" width="86" height="80" fill="url(#gF1)"/>
<path d="M303.600 1488c-5.500 12-8.400 27-8.600 41.500q-.1 4.800 4 4.800h7.800c.3 12 1.500 24 3.400 33.300h40v-80z" fill="url(#gF2)"/>
<path d="M295 1529.500q-.1 4.800 4 4.800h7.800c.3 12 1.500 24 3.400 33.300" fill="none" stroke="#1d2f42" stroke-width="1.300" stroke-opacity=".85"/>
<path d="M276.400 1539.100c13 12.800 38.300 12.800 51.300-.5" fill="none" stroke="#15222f" stroke-width="2.200" stroke-linecap="round"/>
<rect x="281.400" y="1507.800" width="3.600" height="9.200" rx="1.800" fill="#15222f"/><rect x="319.100" y="1508" width="3.600" height="9.200" rx="1.800" fill="#15222f"/></g>
<circle cx="414.100" cy="1528.200" r="45.200" fill="url(#gRing)"/><circle cx="414.100" cy="1528.200" r="41.900" fill="url(#gA)"/>
<rect x="383" y="1524.500" width="62" height="6" fill="#eef1f4"/>
<path d="M410 1500.300c2-2 5.500-3.200 7.200-2.300l18.500 33.500-6.900 4z" fill="#f4f5f7"/>
<path d="M428.800 1535.500l6.900-4 3.200 5.800c3.200 5.800 3.600 10.500 2.200 13.500-1 1.200-1.800-1.500-4-4.500-2.600-3.400-4.200-3.200-5.600-5.700z" fill="#e4e7ea"/>
<path d="M405.600 1507.300c1.200-1.800 5.400-.2 6.900 2.400l-17 33.800-6.500-3.500z" fill="#f4f5f7"/>
<path d="M389 1540l6.500 3.500-10 7.500z" fill="#e4e7ea"/>
<path d="M406 1513.200l6.200 3.200" stroke="#2a8af0" stroke-width=".9"/><path d="M389.600 1539l6.400 3.400" stroke="#2a8af0" stroke-width=".9"/><path d="M428.200 1534.200l6.800-3.900M431 1539.300l6.800-3.900" stroke="#2a8af0" stroke-width=".9"/>
<circle cx="526.2" cy="1527.7" r="45.200" fill="url(#gRing)"/><circle cx="526.2" cy="1527.7" r="41.500" fill="url(#gS)"/>
<path d="M559.7 1527.7L565.7 1527.7M562.3 1530.9L565.5 1531.1M559.2 1533.5L565.1 1534.6M561.2 1537.1L564.4 1537.9M557.7 1539.2L563.3 1541.2M559.0 1543.0L562.0 1544.4M555.2 1544.5L560.4 1547.5M555.9 1548.5L558.6 1550.4M551.9 1549.2L556.5 1553.1M551.8 1553.3L554.1 1555.6M547.7 1553.4L551.6 1558.0M547.0 1557.4L548.9 1560.1M543.0 1556.7L546.0 1561.9M541.5 1560.5L542.9 1563.5M537.7 1559.2L539.7 1564.8M535.6 1562.7L536.4 1565.9M532.0 1560.7L533.1 1566.6M529.4 1563.8L529.6 1567.0M526.2 1561.2L526.2 1567.2M523.0 1563.8L522.8 1567.0M520.4 1560.7L519.3 1566.6M516.8 1562.7L516.0 1565.9M514.7 1559.2L512.7 1564.8M510.9 1560.5L509.5 1563.5M509.5 1556.7L506.5 1561.9M505.4 1557.4L503.5 1560.1M504.7 1553.4L500.8 1558.0M500.6 1553.3L498.3 1555.6M500.5 1549.2L495.9 1553.1M496.5 1548.5L493.8 1550.4M497.2 1544.5L492.0 1547.5M493.4 1543.0L490.4 1544.4M494.7 1539.2L489.1 1541.2M491.2 1537.1L488.0 1537.9M493.2 1533.5L487.3 1534.6M490.1 1530.9L486.9 1531.1M492.7 1527.7L486.7 1527.7M490.1 1524.5L486.9 1524.3M493.2 1521.9L487.3 1520.8M491.2 1518.3L488.0 1517.5M494.7 1516.2L489.1 1514.2M493.4 1512.4L490.4 1511.0M497.2 1511.0L492.0 1508.0M496.5 1506.9L493.8 1505.0M500.5 1506.2L495.9 1502.3M500.6 1502.1L498.3 1499.8M504.7 1502.0L500.8 1497.4M505.4 1498.0L503.5 1495.3M509.5 1498.7L506.5 1493.5M510.9 1494.9L509.5 1491.9M514.7 1496.2L512.7 1490.6M516.8 1492.7L516.0 1489.5M520.4 1494.7L519.3 1488.8M523.0 1491.6L522.8 1488.4M526.2 1494.2L526.2 1488.2M529.4 1491.6L529.6 1488.4M532.0 1494.7L533.1 1488.8M535.6 1492.7L536.4 1489.5M537.7 1496.2L539.7 1490.6M541.5 1494.9L542.9 1491.9M543.0 1498.7L546.0 1493.5M547.0 1498.0L548.9 1495.3M547.7 1502.0L551.6 1497.4M551.8 1502.1L554.1 1499.8M551.9 1506.2L556.5 1502.3M555.9 1506.9L558.6 1505.0M555.2 1511.0L560.4 1508.0M559.0 1512.4L562.0 1511.0M557.7 1516.2L563.3 1514.2M561.2 1518.3L564.4 1517.5M559.2 1521.9L565.1 1520.8M562.3 1524.5L565.5 1524.3" stroke="#fff" stroke-width="1.0" fill="none"/>
<path d="M553.800 1500l-23.700 31.700-7.800-7.800z" fill="#f0323a"/><path d="M553.800 1500l-27.600 27.700-3.900-3.800z" fill="#ff5a58"/><path d="M498.600 1555.300l23.700-31.400 7.800 7.800z" fill="#fff"/><path d="M498.600 1555.300l27.600-27.600 3.900 3.800z" fill="#c8ccd4"/>
<g transform="translate(5.500 -3) rotate(-9.900 632 1530.500)"><g fill="#fff"><circle cx="599.0" cy="1490.0" r="2.0"/><circle cx="599.0" cy="1571.0" r="2.0"/><circle cx="604.5" cy="1490.0" r="2.0"/><circle cx="604.5" cy="1571.0" r="2.0"/><circle cx="610.0" cy="1490.0" r="2.0"/><circle cx="610.0" cy="1571.0" r="2.0"/><circle cx="615.5" cy="1490.0" r="2.0"/><circle cx="615.5" cy="1571.0" r="2.0"/><circle cx="621.0" cy="1490.0" r="2.0"/><circle cx="621.0" cy="1571.0" r="2.0"/><circle cx="626.5" cy="1490.0" r="2.0"/><circle cx="626.5" cy="1571.0" r="2.0"/><circle cx="632.0" cy="1490.0" r="2.0"/><circle cx="632.0" cy="1571.0" r="2.0"/><circle cx="637.5" cy="1490.0" r="2.0"/><circle cx="637.5" cy="1571.0" r="2.0"/><circle cx="643.0" cy="1490.0" r="2.0"/><circle cx="643.0" cy="1571.0" r="2.0"/><circle cx="648.5" cy="1490.0" r="2.0"/><circle cx="648.5" cy="1571.0" r="2.0"/><circle cx="654.0" cy="1490.0" r="2.0"/><circle cx="654.0" cy="1571.0" r="2.0"/><circle cx="659.5" cy="1490.0" r="2.0"/><circle cx="659.5" cy="1571.0" r="2.0"/><circle cx="665.0" cy="1490.0" r="2.0"/><circle cx="665.0" cy="1571.0" r="2.0"/><circle cx="599.0" cy="1495.4" r="2.0"/><circle cx="665.0" cy="1495.4" r="2.0"/><circle cx="599.0" cy="1500.8" r="2.0"/><circle cx="665.0" cy="1500.8" r="2.0"/><circle cx="599.0" cy="1506.2" r="2.0"/><circle cx="665.0" cy="1506.2" r="2.0"/><circle cx="599.0" cy="1511.6" r="2.0"/><circle cx="665.0" cy="1511.6" r="2.0"/><circle cx="599.0" cy="1517.0" r="2.0"/><circle cx="665.0" cy="1517.0" r="2.0"/><circle cx="599.0" cy="1522.4" r="2.0"/><circle cx="665.0" cy="1522.4" r="2.0"/><circle cx="599.0" cy="1527.8" r="2.0"/><circle cx="665.0" cy="1527.8" r="2.0"/><circle cx="599.0" cy="1533.2" r="2.0"/><circle cx="665.0" cy="1533.2" r="2.0"/><circle cx="599.0" cy="1538.6" r="2.0"/><circle cx="665.0" cy="1538.6" r="2.0"/><circle cx="599.0" cy="1544.0" r="2.0"/><circle cx="665.0" cy="1544.0" r="2.0"/><circle cx="599.0" cy="1549.4" r="2.0"/><circle cx="665.0" cy="1549.4" r="2.0"/><circle cx="599.0" cy="1554.8" r="2.0"/><circle cx="665.0" cy="1554.8" r="2.0"/><circle cx="599.0" cy="1560.2" r="2.0"/><circle cx="665.0" cy="1560.2" r="2.0"/><circle cx="599.0" cy="1565.6" r="2.0"/><circle cx="665.0" cy="1565.6" r="2.0"/></g><rect x="599" y="1490" width="66" height="81" fill="#fff"/><rect x="603.500" y="1494" width="57" height="73" fill="url(#gSky)"/></g>
<path d="M634 1527L628 1515 622 1505 615 1497.500 609.500 1500 611 1506 612.500 1512 617 1521 624 1530 630 1533z" fill="#dcd8d0"/>
<path d="M634 1527L628 1515 622 1505 615 1497.500" fill="none" stroke="#5c4229" stroke-width="2"/>
<path d="M609.500 1500l4 1M610.500 1504l4.500 1M611.500 1508l5 1.500M613 1512.500l5.500 2M615.500 1517l6 2.500" stroke="#8a8378" stroke-width=".7" fill="none"/>
<path d="M638 1528L645 1531 653 1536 661 1546 658 1548.500 652 1546 645 1541.500 637 1536z" fill="#d6d2ca"/>
<path d="M638 1528L645 1531 653 1536 661 1546" fill="none" stroke="#5c4229" stroke-width="2"/>
<path d="M631 1533L615.500 1539 618 1545 624 1547.500 633 1538z" fill="#c9a262"/>
<path d="M617 1541l13-6M620 1545.500l11-10M624 1547l8-10" stroke="#a07a44" stroke-width=".7" fill="none"/>
<ellipse cx="634.500" cy="1530.500" rx="6.500" ry="4.200" transform="rotate(38 634.500 1530.500)" fill="#c9a567"/>
<circle cx="639.300" cy="1525" r="2.300" fill="#9c7746"/><path d="M640.800 1523.600l2.600.6-2 1.600z" fill="#3a2a18"/>
<circle cx="663.900" cy="1553.900" r="21.700" fill="#a9b6d0" fill-opacity=".22" stroke="#5f5a78" stroke-opacity=".55" stroke-width="1.700"/><circle cx="663.900" cy="1553.900" r="11.200" fill="#b4c6e4" fill-opacity=".25" stroke="#5f5a78" stroke-opacity=".5" stroke-width="1.500"/>
<path d="M663.900 1550.600c-1.600-1.300-4.500-.9-4.700 2.300-.2 2.900 1.700 5.600 3 5.600.8 0 1-.5 1.900-.5s1 .5 1.800.5c1.300 0 2.700-2.300 2.900-3.400-2.200-.9-2.200-3.800 0-4.600-1-1.400-3.300-1.500-4.900.1z M664 1549.800c0-1.600 1.200-2.700 2.400-2.800 0 1.600-1.200 2.800-2.400 2.800z" fill="#4c6aa2" fill-opacity=".8"/>
<path id="pmk" d="M647.300 1553.900a16.600 16.600 0 1 1 33.200 0a16.600 16.600 0 1 1 -33.200 0" fill="none"/><text font-family="\'Liberation Sans\',sans-serif" font-size="5.300" font-weight="bold" fill="#54506e" fill-opacity=".75" letter-spacing=".35"><textPath href="#pmk" startOffset="7">HELLO FROM</textPath></text>
<path id="pmk2" d="M645.400 1553.900a18.500 18.500 0 1 0 37 0" fill="none"/><text font-family="\'Liberation Sans\',sans-serif" font-size="5.300" font-weight="bold" fill="#54506e" fill-opacity=".75" letter-spacing=".35"><textPath href="#pmk2" startOffset="10">CALIFORNIA</textPath></text>
<path d="M700.500 1503L785 1492.500 795.500 1557 710 1570.400z" fill="url(#gX)"/>
<path d="M704.500 1506.300L781.800 1496.700 791.200 1554 713 1566.200z" fill="none" stroke="#bfe2fb" stroke-width=".9"/>
<g fill="none" stroke="#c9e7fc" stroke-width="1.300"><path d="M717 1533l62-8.500 .8 5-62 8.500z"/><path d="M740 1503.500l6-1.500 32 46c2 6 0 9-1 8z"/><path d="M736 1512l6.500 2-14.500 37-5 8 0-9z"/></g>
<path d="M771.500 1520L758 1566.500" stroke="#1c1d21" stroke-width="10" stroke-linecap="round" fill="none"/><path d="M769.500 1522L757 1565" stroke="#3c3e44" stroke-width="2" stroke-linecap="round" fill="none"/>
<path d="M767.200 1519.200l8.200 2.300 8-27-8.800-3.500z" fill="url(#gHam)"/>
<path d="M754.400 1484.500c6-6.500 18-7 27-2.500l11.600 4.400 6.600 2.600c1.600 2.400 1.600 5.800 0 8.200l-7.600-.4-6-1.800c-6-1-10 1-12 5l-6.400-3c2-7-4-11-11-10z" fill="url(#gHam)" stroke="#77797d" stroke-width=".7"/>
<path d="M792.500 1486.300c2 3 2 7.500-.3 10.500" stroke="#6a6c70" stroke-width=".8" fill="none"/>
<path d="M856.100 1478.300L911.700 1517.700 868 1576.700 812.900 1530.100z" fill="#1786cf"/>
<path d="M856.300 1478.300L912.400 1518.200 866 1522z" fill="#1fb4ec"/><path d="M856.300 1478.300L866 1522 813.600 1531.500z" fill="#1a9ade"/><path d="M866 1522L912.400 1518.200 868.700 1576.100z" fill="#0d68b4"/><path d="M866 1522L868.700 1576.100 813.600 1531.500z" fill="#1278c2"/>
<g fill="none" stroke-linecap="round" stroke-linejoin="round"><g stroke="#d99400" stroke-width="11.500"><path d="M818.500 1501.600C826 1498 834 1502 835.700 1516.800L835.700 1536C836 1553 851 1560 862.500 1550"/><ellipse cx="862.300" cy="1523.400" rx="11" ry="22.500" transform="rotate(-4 862.300 1523.400)"/><path d="M882.300 1492C884 1505 890 1520 890.800 1534.800C891 1548 878 1554 866.500 1547"/></g>
<g stroke="#fcc30a" stroke-width="8.800"><path d="M818.500 1501.600C826 1498 834 1502 835.700 1516.800L835.700 1536C836 1553 851 1560 862.500 1550"/><ellipse cx="862.300" cy="1523.400" rx="11" ry="22.500" transform="rotate(-4 862.300 1523.400)"/><path d="M882.300 1492C884 1505 890 1520 890.800 1534.800C891 1548 878 1554 866.500 1547"/></g>
<g stroke="#e6a800" stroke-width="8.800" stroke-dasharray="1.200 3.200" opacity=".55"><path d="M818.500 1501.600C826 1498 834 1502 835.700 1516.800L835.700 1536C836 1553 851 1560 862.500 1550"/><ellipse cx="862.300" cy="1523.400" rx="11" ry="22.500" transform="rotate(-4 862.300 1523.400)"/><path d="M882.300 1492C884 1505 890 1520 890.800 1534.800C891 1548 878 1554 866.500 1547"/></g></g>
<path d="M974.200 1486.800a45.200 38 0 1 1 -14 74.100q-6 4.200-15.500 5.700q5-4.500 3.600-10.700a45.200 38 0 0 1 25.900-69.100z" fill="url(#gM)"/>
<path d="M989.400 1523c14.700 0 26.600 9.800 26.600 21.900 0 7-4 13.300-10.200 17.300.6 3.200 2.300 6.200 4.500 8.400-4.500-.3-8.800-2.300-11.800-5-2.900.8-6 1.200-9.100 1.200-14.700 0-26.600-9.800-26.600-21.900s11.900-21.900 26.600-21.900z" fill="url(#gM2)"/>
<circle cx="977" cy="1545.400" r="3.900" fill="#1c60b6"/><circle cx="990.300" cy="1545.400" r="3.900" fill="#1c60b6"/><circle cx="1003.600" cy="1545.400" r="3.900" fill="#1c60b6"/>
<circle cx="1086.300" cy="1527.700" r="45.200" fill="#fbe9ec"/><circle cx="1086.300" cy="1527.700" r="41.800" fill="url(#gI)"/>
<path d="M1075 1510.500l32.500-10.500v40.500c0 6-4.500 9.800-10.500 10.800-5.500.8-9.800-2-9.800-6.400 0-4.500 4-8 9.500-8.800 1.800-.2 3.500-.2 4.800.2v-23.800l-20.500 6.500v29.300c0 6-4.500 9.800-10.500 10.800-5.500.8-9.800-2-9.800-6.400 0-4.500 4-8 9.500-8.800 1.800-.2 3.500-.2 4.800.2z" fill="#fff"/>
<rect x="1153" y="1485.900" width="90.200" height="83.600" rx="5" fill="url(#gP)"/><rect x="1153" y="1485.900" width="90.200" height="83.600" rx="5" fill="none" stroke="#6a6e72" stroke-opacity=".5" stroke-width="1"/>
<circle cx="1198.0" cy="1527.7" r="37" fill="#3e4044"/>
<polygon points="1231.0,1526.5 1231.0,1528.9 1225.3,1530.6 1225.1,1532.6 1230.0,1535.9 1229.3,1538.1 1223.4,1538.2 1222.6,1540.0 1226.4,1544.5 1225.1,1546.5 1219.4,1545.0 1218.1,1546.4 1220.5,1551.9 1218.7,1553.4 1213.7,1550.3 1212.0,1551.4 1212.8,1557.2 1210.6,1558.2 1206.7,1553.8 1204.8,1554.3 1203.9,1560.2 1201.5,1560.5 1199.0,1555.2 1197.0,1555.2 1194.5,1560.5 1192.1,1560.2 1191.2,1554.3 1189.3,1553.8 1185.4,1558.2 1183.2,1557.2 1184.0,1551.4 1182.3,1550.3 1177.3,1553.4 1175.5,1551.9 1177.9,1546.4 1176.6,1545.0 1170.9,1546.5 1169.6,1544.5 1173.4,1540.0 1172.6,1538.2 1166.7,1538.1 1166.0,1535.9 1170.9,1532.6 1170.7,1530.6 1165.0,1528.9 1165.0,1526.5 1170.7,1524.8 1170.9,1522.8 1166.0,1519.5 1166.7,1517.3 1172.6,1517.2 1173.4,1515.4 1169.6,1510.9 1170.9,1508.9 1176.6,1510.4 1177.9,1509.0 1175.5,1503.5 1177.3,1502.0 1182.3,1505.1 1184.0,1504.0 1183.2,1498.2 1185.4,1497.2 1189.3,1501.6 1191.2,1501.1 1192.1,1495.2 1194.5,1494.9 1197.0,1500.2 1199.0,1500.2 1201.5,1494.9 1203.9,1495.2 1204.8,1501.1 1206.7,1501.6 1210.6,1497.2 1212.8,1498.2 1212.0,1504.0 1213.7,1505.1 1218.7,1502.0 1220.5,1503.5 1218.1,1509.0 1219.4,1510.4 1225.1,1508.9 1226.4,1510.9 1222.6,1515.4 1223.4,1517.2 1229.3,1517.3 1230.0,1519.5 1225.1,1522.8 1225.3,1524.8" fill="#b9bbbd"/>
<circle cx="1198.0" cy="1527.7" r="24" fill="#8e9092"/><circle cx="1198.0" cy="1527.7" r="20.500" fill="#4b4d50"/>
<path d="M1198.0 1527.7L1187.0 1508.6M1198.0 1527.7L1220.0 1527.7M1198.0 1527.7L1187.0 1546.8" stroke="#b4b6b8" stroke-width="6.5" fill="none"/>
<circle cx="1198.0" cy="1527.7" r="4.200" fill="#c9cbcd"/><circle cx="1198.0" cy="1527.7" r="1.800" fill="#8a8c8e"/>
<rect x="1265.500" y="1488.300" width="89.300" height="78.300" rx="5" fill="#0c0c0c" stroke="#77726e" stroke-width="1"/><rect x="1271.500" y="1494.300" width="77.300" height="66.300" rx="1.500" fill="#262626"/>
<text x="1276.500" y="1515" font-family="'Liberation Mono',monospace" font-weight="bold" font-size="21" fill="#fff">&gt;_</text>
<g transform="rotate(8 1420 1530)"><rect x="1380" y="1490" width="84" height="86" fill="#e4e4e4" stroke="#bdbdbd" stroke-width=".6"/></g>
<g transform="rotate(-4 1422 1530)"><rect x="1383" y="1484" width="82" height="92" fill="#f7f7f7" stroke="#c6c6c6" stroke-width=".6"/><g font-family="'Liberation Mono',monospace" font-weight="bold" font-size="7.200" fill="#2c2c2c" letter-spacing=".3"><text x="1396" y="1498.0">85d a410 ee37</text><text x="1396" y="1504.5">b615 af3e cd00</text><text x="1396" y="1511.1">8fcb 9a42 e47a</text><text x="1396" y="1517.7">d294 f236 2b5b</text><text x="1396" y="1524.2">2bfc b54e f03e</text><text x="1396" y="1530.8">775d d231 d90e</text><text x="1396" y="1537.3">c37e aa3b c74b</text><text x="1396" y="1543.8">b711 4bb3 ec9b</text><text x="1396" y="1550.4">794c d99e 3b42</text><text x="1396" y="1557.0">735c e5e0 2c37</text><text x="1396" y="1563.5">2ba7 dbb2 4c0a</text><text x="1396" y="1570.0">3b8e c729 34e1</text></g></g>
<path d="M1388.500 1499.500c2-12 8-21 17-21.500 6-.3 9 5 11.500 11l48.500 85" fill="none" stroke="#2b2b2d" stroke-width="5.200" stroke-linecap="round" stroke-linejoin="round"/><path d="M1386 1492l3 10 4-9z" fill="#2b2b2d"/>
<path d="M1493.500 1490.600L1563 1480.200 1575.300 1562.800 1506.800 1574.200z" fill="#c4c7c9"/>
<path d="M1493.500 1490.600L1563 1480.200 1565.300 1495.500 1495.800 1506z" fill="#1f2b2d"/>
<path d="M1548.300 1498L1565.300 1495.500 1575.300 1562.800 1558.500 1565.600z" fill="#f5860f"/>
<g stroke="#a9adaf" stroke-width=".8" fill="none"><path d="M1497.800 1519.500l68.500-10.300M1499.800 1533l68.500-10.300M1501.800 1546.500l68.500-10.300M1503.800 1560l68.500-10.300M1513 1503.500l10 67.500M1530.500 1500.800l10 67.700"/></g>
<text transform="rotate(-8.500 1530 1497)" x="1510" y="1501" font-size="11" fill="#9fb3b1" font-family="'Liberation Sans',sans-serif">3.141593</text>
<g font-size="6.500" fill="#5f6365" font-family="'Liberation Sans',sans-serif" transform="rotate(-8.500 1530 1530)"><text x="1503" y="1523">7</text><text x="1520" y="1523">8</text><text x="1537" y="1523">9</text><text x="1503" y="1537">4</text><text x="1520" y="1537">5</text><text x="1537" y="1537">6</text><text x="1503" y="1551">1</text><text x="1520" y="1551">2</text><text x="1537" y="1551">3</text><text x="1503" y="1565">0</text></g>
<polygon points="1698.3,1527.9 1672.2,1574.4 1619.8,1574.4 1593.7,1527.9 1619.8,1481.4 1672.2,1481.4" fill="#5599f7" stroke="#5599f7" stroke-width="8" stroke-linejoin="round" transform="translate(1646.0 1527.9) scale(.925) translate(-1646.0 -1527.9)"/>
<path d="M1646 1527.900L1698 1527.900 1672 1574 1646 1574 1620 1574z" fill="#4a8fe8" opacity=".55"/>
<circle cx="1646" cy="1528" r="16.200" fill="none" stroke="#fff" stroke-width="5.400"/><circle cx="1646" cy="1528" r="6.300" fill="none" stroke="#fff" stroke-width="3.200"/><path d="M1646 1497l5 10h-10z M1614.500 1528l14-4.500v9z M1677.500 1528l-14-4.500v9z" fill="#fff"/>
<path d="M1719.300 1478.800h77.800a10 10 0 0 1 10 10v68.800a10 10 0 0 1 -10 10h-26.500l-12.800 12-12.800-12h-25.700a10 10 0 0 1 -10-10v-68.800a10 10 0 0 1 10-10z" fill="url(#gT)" stroke="#1d5a8c" stroke-width="1"/>
<path d="M1789 1498.500c-2.300 1-4.700 1.700-7.300 2 2.600-1.600 4.600-4 5.600-7-2.500 1.500-5.200 2.500-8 3.100-2.300-2.500-5.700-4-9.400-4-7 0-12.800 5.700-12.800 12.800 0 1 .1 2 .3 2.900-10.600-.5-20-5.600-26.300-13.300-1.100 1.900-1.700 4.100-1.700 6.400 0 4.400 2.300 8.400 5.700 10.600-2.100-.1-4.100-.6-5.800-1.600v.2c0 6.200 4.400 11.400 10.300 12.500-1.100.3-2.200.5-3.400.5-.8 0-1.600-.1-2.400-.2 1.600 5.100 6.300 8.800 12 8.900-4.400 3.400-9.900 5.500-15.900 5.500-1 0-2-.1-3-.2 5.700 3.600 12.400 5.700 19.600 5.700 23.500 0 36.400-19.500 36.400-36.400v-1.700c2.500-1.800 4.700-4 6.400-6.600z" fill="#fff" transform="translate(1758 1524) scale(1.080) translate(-1758 -1524)"/>
<g transform="rotate(-7 1870 1527)"><rect x="1832" y="1488" width="68" height="84" fill="#f6efc2" stroke="#d9cf98" stroke-width=".8"/><rect x="1832" y="1488" width="68" height="8" fill="#efe6b0"/><path d="M1838 1488v84" stroke="#e8b8a0" stroke-width=".7"/>
<g font-family="'Liberation Mono',monospace" font-weight="bold" font-size="5.500" fill="#3a3a3a"><text x="1841" y="1514">$12.95 = euros</text><text x="1850" y="1526">$2.20</text><text x="1846" y="1534">x 2 tickets</text><text x="1843" y="1549">-10% discount</text></g><ellipse cx="1862" cy="1528" rx="19" ry="9.500" fill="none" stroke="#3a3a3a" stroke-width=".8"/></g>
<g transform="rotate(-9 1895 1516)"><rect x="1878" y="1486" width="34" height="60" rx="5" fill="#d8d8da" stroke="#9a9a9c" stroke-width=".8"/><rect x="1882.500" y="1490" width="25" height="50" rx="2" fill="#23282a"/><g font-family="'Liberation Sans',sans-serif" font-size="9" fill="#46cfe8"><text x="1885" y="1503">$8</text><text x="1885" y="1519">$4</text><text x="1885" y="1535">$3</text></g></g>
<path d="M1847 1549l52 17.500c4 1.200 2.500 6.500-1.500 5.500l-50.500-17z" fill="#f04a2a"/><path d="M1847 1549l-2.500-1.500 1 3.500 4 2z" fill="#b0b0b0"/><path d="M1888 1563l11 3.500c4 1.200 2.500 6.500-1.500 5.500l-11-3.800z" fill="#a9abad"/>
<path d="M1981.800 1486.800L2018.300 1505.500 2018.300 1548.500 1981.800 1567.200 1945.300 1548.500 1945.300 1505.500z" fill="url(#gFx)" stroke="url(#gFx)" stroke-width="16" stroke-linejoin="round"/>
<path d="M1940 1553q44-6 86-38l0 38-44 24-42-22z" fill="#bf1a66" opacity=".6"/>
<text transform="rotate(-14 1982 1527)" x="1943" y="1544" font-family="'Liberation Serif',serif" font-style="italic" font-size="56" fill="#fff" stroke="#fff" stroke-width=".9" letter-spacing="-1">flux</text>
<path d="M1946 1558q42-5 74-36" fill="none" stroke="#fff" stroke-width="3.600" stroke-linecap="round"/><path d="M1948 1517q36-3 66-19" fill="none" stroke="#fff" stroke-width="3" stroke-linecap="round"/>
<rect x="2064" y="1482" width="2" height="100" fill="#7b2c1b"/>
<path d="M2110 1491h23l3 4h46a3 3 0 0 1 3 3v53a3 3 0 0 1 -3 3h-72a3 3 0 0 1 -3-3v-57a3 3 0 0 1 3-3z" fill="#6fc6f4"/><path d="M2107 1503h78v48a3 3 0 0 1 -3 3h-72a3 3 0 0 1 -3-3z" fill="#79cef8"/>
<path d="M2113 1487.100h44l22 22v64.700h-66z" fill="#fcfcfc" stroke="#d0d0d0" stroke-width=".5"/><path d="M2157 1487.100l22 22h-17a5 5 0 0 1 -5-5z" fill="#e6e6e6"/>
<polygon points="2169.6,1530.0 2169.6,1531.6 2165.5,1532.8 2165.3,1534.1 2169.0,1536.2 2168.6,1537.8 2164.3,1537.8 2163.8,1539.1 2166.8,1542.1 2166.0,1543.5 2161.9,1542.4 2161.1,1543.5 2163.1,1547.2 2162.0,1548.3 2158.3,1546.3 2157.2,1547.1 2158.3,1551.2 2156.9,1552.0 2153.9,1549.0 2152.6,1549.5 2152.6,1553.8 2151.0,1554.2 2148.9,1550.5 2147.6,1550.7 2146.4,1554.8 2144.8,1554.8 2143.6,1550.7 2142.3,1550.5 2140.2,1554.2 2138.6,1553.8 2138.6,1549.5 2137.3,1549.0 2134.3,1552.0 2132.9,1551.2 2134.0,1547.1 2132.9,1546.3 2129.2,1548.3 2128.1,1547.2 2130.1,1543.5 2129.3,1542.4 2125.2,1543.5 2124.4,1542.1 2127.4,1539.1 2126.9,1537.8 2122.6,1537.8 2122.2,1536.2 2125.9,1534.1 2125.7,1532.8 2121.6,1531.6 2121.6,1530.0 2125.7,1528.8 2125.9,1527.5 2122.2,1525.4 2122.6,1523.8 2126.9,1523.8 2127.4,1522.5 2124.4,1519.5 2125.2,1518.1 2129.3,1519.2 2130.1,1518.1 2128.1,1514.4 2129.2,1513.3 2132.9,1515.3 2134.0,1514.5 2132.9,1510.4 2134.3,1509.6 2137.3,1512.6 2138.6,1512.1 2138.6,1507.8 2140.2,1507.4 2142.3,1511.1 2143.6,1510.9 2144.8,1506.8 2146.4,1506.8 2147.6,1510.9 2148.9,1511.1 2151.0,1507.4 2152.6,1507.8 2152.6,1512.1 2153.9,1512.6 2156.9,1509.6 2158.3,1510.4 2157.2,1514.5 2158.3,1515.3 2162.0,1513.3 2163.1,1514.4 2161.1,1518.1 2161.9,1519.2 2166.0,1518.1 2166.8,1519.5 2163.8,1522.5 2164.3,1523.8 2168.6,1523.8 2169.0,1525.4 2165.3,1527.5 2165.5,1528.8" fill="#9a9c9e"/>
<circle cx="2145.6" cy="1530.8" r="18" fill="#b4b6b8"/><circle cx="2145.6" cy="1530.8" r="15.500" fill="#fcfcfc"/>
<path d="M2145.6 1530.8L2137.1 1516.1M2145.6 1530.8L2162.6 1530.8M2145.6 1530.8L2137.1 1545.5" stroke="#a4a6a8" stroke-width="4.2" fill="none"/>
<circle cx="2145.6" cy="1530.8" r="2.600" fill="#8c8e90"/>
<text x="2146" y="1569.500" text-anchor="middle" font-family="'Liberation Sans',sans-serif" font-size="13.600" fill="#6c6c6c">PROV</text>
<path d="M2226 1490l9-9 8 6 10-8 9 9 11-10 9 10 7-5 6 9-4 12h-62z" fill="#e9e9e9" stroke="#bdbdbd" stroke-width=".7"/>
<path d="M2229 1491l8-8 4 9z M2247 1488l8-7 3 8z M2266 1487l9-7 4 10z M2280 1489l6-4 3 8z" fill="#b9b9b9"/><path d="M2236 1492l6-6 5 7z M2258 1491l5-7 6 8z M2274 1492l5-6 5 7z" fill="#8e8e8e"/><path d="M2243 1489l9-6 6 9-8 6z" fill="#2c9ad2"/><path d="M2262 1485l10 3-4 10-8-3z" fill="#d4701e"/><path d="M2252 1494l8 2-2 6-8-2z" fill="#3c8a3a"/>
<path d="M2220.700 1492c0-5 74.300-5 74.300 0l-9.500 72c-1 13-54.500 13-55.800 0z" fill="url(#gTr)"/>
<ellipse cx="2257.800" cy="1492" rx="37" ry="5" fill="none" stroke="#fff" stroke-opacity=".8" stroke-width="1.200"/>
<circle cx="301.8" cy="1591.600" r="3.700" fill="#2c0704"/>
<circle cx="526.0" cy="1591.600" r="3.700" fill="#2c0704"/>
<circle cx="638.2" cy="1591.600" r="3.700" fill="#2c0704"/>
<circle cx="1981.6" cy="1591.600" r="3.700" fill="#2c0704"/></svg><!--DI1-->
</div>
</body>
</html>
